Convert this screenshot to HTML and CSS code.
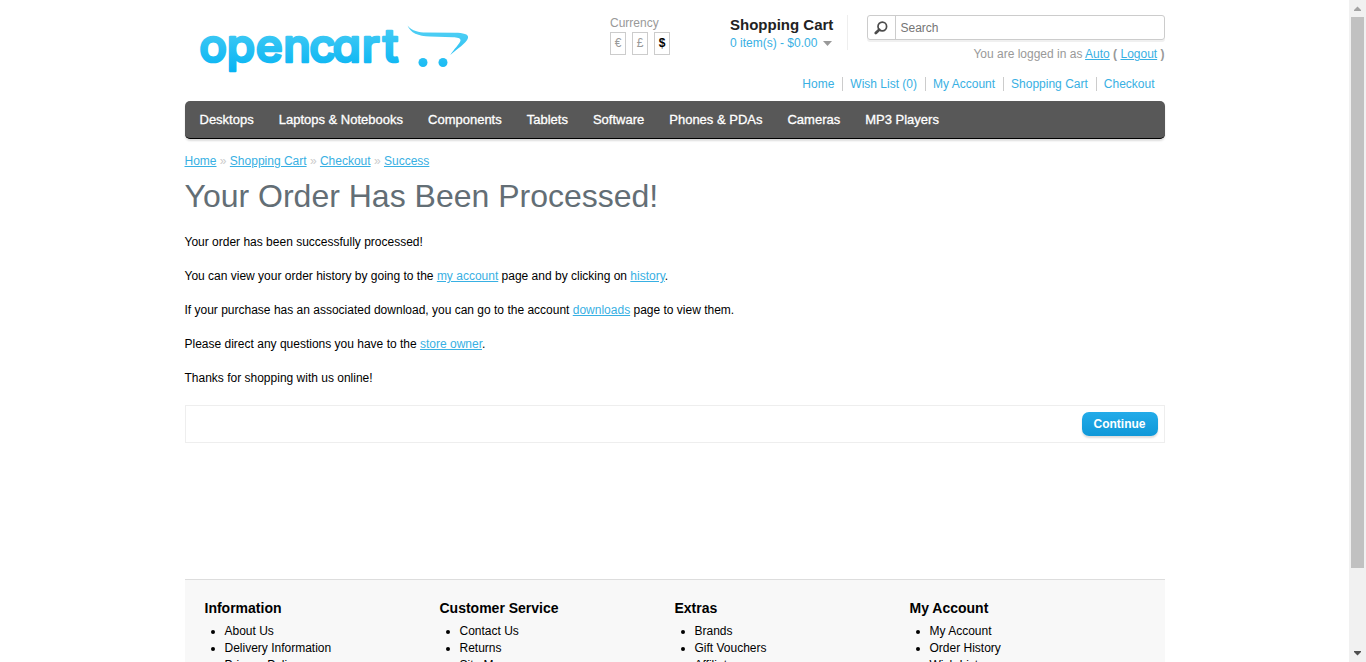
FILE: index.html
```html
<!DOCTYPE html>
<html lang="en">
<head>
<meta charset="utf-8">
<title>Your Order Has Been Processed!</title>
<link rel="stylesheet" href="styles.css">
</head>
<body>
<div class="viewport">
<main class="page">
  <div class="container">
    <header class="header">
      <svg class="logo" width="300" height="80" viewBox="0 0 300 80">
        <defs>
          <linearGradient id="blue" gradientUnits="userSpaceOnUse" x1="0" y1="14" x2="0" y2="62">
            <stop offset="0" stop-color="#4acdf4"/><stop offset="1" stop-color="#05b3f3"/>
          </linearGradient>
        </defs>
        <text class="logo-text" y="51.9" x="14.2 41.8 70.8 98.2 124.3 147.5 176.800 197.8" fill="url(#blue)" stroke="url(#blue)">opencart</text>
        <g transform="translate(0 10.500)" fill="url(#blue)">
          <path d="M222.500 5C227 10.500 234 12 241 12L270 12.300C278 12.500 284 13.500 283 17.500C281.500 22.500 272 28.500 265.300 34.500C269 28.500 275 23 275.500 20C275.700 17.200 272 16.900 268 16.700L245 16C233 15.500 225.500 12.500 222.500 5Z"/>
          <circle cx="238" cy="42" r="4.500"/>
          <circle cx="258" cy="42" r="4.500"/>
        </g>
      </svg>
      <div class="header-side">
        <div class="header-top">
          <div class="currency">Currency
            <div class="currency-list"><a>€</a><a>£</a><a class="active">$</a></div>
          </div>
          <div class="cart">
            <h4>Shopping Cart</h4>
            <a class="cart-total">0 item(s) - $0.00<svg width="9" height="5" viewBox="0 0 9 5"><path d="M0 0H9L4.500 5Z" fill="#999"/></svg></a>
          </div>
          <div class="account">
            <div class="search">
              <span class="search-button"><svg width="14" height="14" viewBox="0 0 14 14" fill="none" stroke="#4c4c4c"><circle cx="8.300" cy="5.500" r="4.300" stroke-width="1.700"/><path d="M5.200 8.700L1.800 12" stroke-width="2.700" stroke-linecap="round"/></svg></span>
              <span class="search-text">Search</span>
            </div>
            <div class="welcome">You are logged in as <a>Auto</a> <b>(</b> <a>Logout</a> <b>)</b></div>
          </div>
        </div>
        <nav class="links"><a>Home</a><a>Wish List (0)</a><a>My Account</a><a>Shopping Cart</a><a>Checkout</a></nav>
      </div>
    </header>
    <nav class="menu"><a>Desktops</a><a>Laptops &amp; Notebooks</a><a>Components</a><a>Tablets</a><a>Software</a><a>Phones &amp; PDAs</a><a>Cameras</a><a>MP3 Players</a></nav>
    <section class="content">
      <div class="breadcrumb"><a>Home</a> » <a>Shopping Cart</a> » <a>Checkout</a> » <a>Success</a></div>
      <h1>Your Order Has Been Processed!</h1>
      <p>Your order has been successfully processed!</p>
      <p>You can view your order history by going to the <a>my account</a> page and by clicking on <a>history</a>.</p>
      <p>If your purchase has an associated download, you can go to the account <a>downloads</a> page to view them.</p>
      <p>Please direct any questions you have to the <a>store owner</a>.</p>
      <p>Thanks for shopping with us online!</p>
      <div class="buttons"><a class="button">Continue</a></div>
    </section>
    <footer class="footer">
      <div class="column"><h3>Information</h3><ul><li>About Us</li><li>Delivery Information</li><li>Privacy Policy</li></ul></div>
      <div class="column"><h3>Customer Service</h3><ul><li>Contact Us</li><li>Returns</li><li>Site Map</li></ul></div>
      <div class="column"><h3>Extras</h3><ul><li>Brands</li><li>Gift Vouchers</li><li>Affiliates</li></ul></div>
      <div class="column"><h3>My Account</h3><ul><li>My Account</li><li>Order History</li><li>Wish List</li></ul></div>
    </footer>
  </div>
</main>
<div class="scrollbar">
  <svg width="17" height="17" viewBox="0 0 17 17"><path d="M5 11V10L8.500 6.500L12 10V11Z" fill="#a3a3a3"/></svg>
  <div class="thumb"></div>
  <svg width="17" height="17" viewBox="0 0 17 17"><path d="M5 6V7L8.500 10.500L12 7V6Z" fill="#505050"/></svg>
</div>
</div>
</body>
</html>
```
FILE: styles.css
```css
* { box-sizing: border-box; }
body { margin: 0; background: #fff; color: #000; font: 12px/17px "Liberation Sans", Arial, sans-serif; }
h1, h3, h4, p, ul { margin: 0; padding: 0; }
a { color: #38b0e3; }
.viewport { display: flex; height: 662px; overflow: hidden; }
.page { flex: 1; height: 662px; overflow: hidden; }
.container { width: 980px; margin: 0 auto; }

.header { display: flex; height: 101px; padding-top: 10px; }
.logo { flex: none; margin-left: .5px; }
.logo-text { font: 500 46px Inter, "Open Sans", sans-serif; font-feature-settings: "cv11"; stroke-width: 2.6px; stroke-linejoin: round; }
.header-side { width: 554.5px; margin-left: 125px; }
.header-top { display: flex; height: 64px; padding-top: 5px; }
.currency { width: 120px; color: #999; line-height: 16px; }
.currency-list { display: flex; gap: 6px; margin-top: 1px; }
.currency-list a { width: 16px; height: 23px; border: 1px solid #ccc; color: #999; text-align: center; line-height: 21px; }
.currency-list .active { color: #000; font-weight: bold; }
.cart { width: 118px; height: 35px; border-right: 1px solid #eee; }
.cart h4 { color: #222; font-size: 15px; line-height: 20px; }
.cart-total { display: flex; align-items: center; gap: 6px; line-height: 16px; }
.cart-total svg { margin-top: 1px; }
.account { width: 298px; margin-left: 18.5px; }
.search { display: flex; height: 25px; border: 1px solid #ccc; border-radius: 3px; box-shadow: 0 2px 0 #f0f0f0; }
.search-button { display: flex; width: 28px; align-items: center; justify-content: center; border-right: 1px solid #ccc; }
.search-text { padding-left: 5px; color: #757575; line-height: 24px; }
.welcome { margin-top: 6px; color: #999; text-align: right; }
.welcome a { text-decoration: underline; }
.links { display: flex; justify-content: flex-end; padding: 3px 10px 0 0; line-height: 14px; }
.links a + a { margin-left: 8px; padding-left: 7px; border-left: 1px solid #ccc; }

.menu { display: flex; gap: 25px; height: 38px; padding-left: 15px; background: #585858; border-bottom: 1px solid #000; border-radius: 5px; box-shadow: 0 2px 2px #ddd; }
.menu a { color: #fff; font-size: 13px; line-height: 37px; -webkit-text-stroke: .3px #fff; }
.content { height: 440px; padding-top: 14px; }
.content a:not(.button) { text-decoration: underline; }
.breadcrumb { height: 25px; color: #ccc; }
h1 { color: #636e75; font-size: 32px; font-weight: normal; line-height: 37px; margin-bottom: 19px; }
.content p { margin-bottom: 17px; }
.content .buttons { display: flex; height: 38px; justify-content: flex-end; margin-top: 18px; padding: 6px; border: 1px solid #eee; }
.button { height: 24px; width: 76px; border-radius: 7px; color: #fff; font-weight: bold; line-height: 24px; text-align: center; background: linear-gradient(#23abe9, #0f98d8); box-shadow: 0 2px 2px #ddd; }
.footer { display: flex; height: 200px; padding: 20px 20px 0; border-top: 1px solid #ddd; background: #f8f8f8; }
.column { width: 235px; }
.column h3 { font-size: 14px; line-height: 17px; margin-bottom: 6px; }
.column ul { padding-left: 20px; }

.scrollbar { display: flex; flex-direction: column; width: 17px; height: 662px; background: #f1f1f1; }
.thumb { width: 13px; height: 551px; margin: 0 2px; background: #c1c1c1; }
.scrollbar svg:last-child { margin-top: auto; }
```
